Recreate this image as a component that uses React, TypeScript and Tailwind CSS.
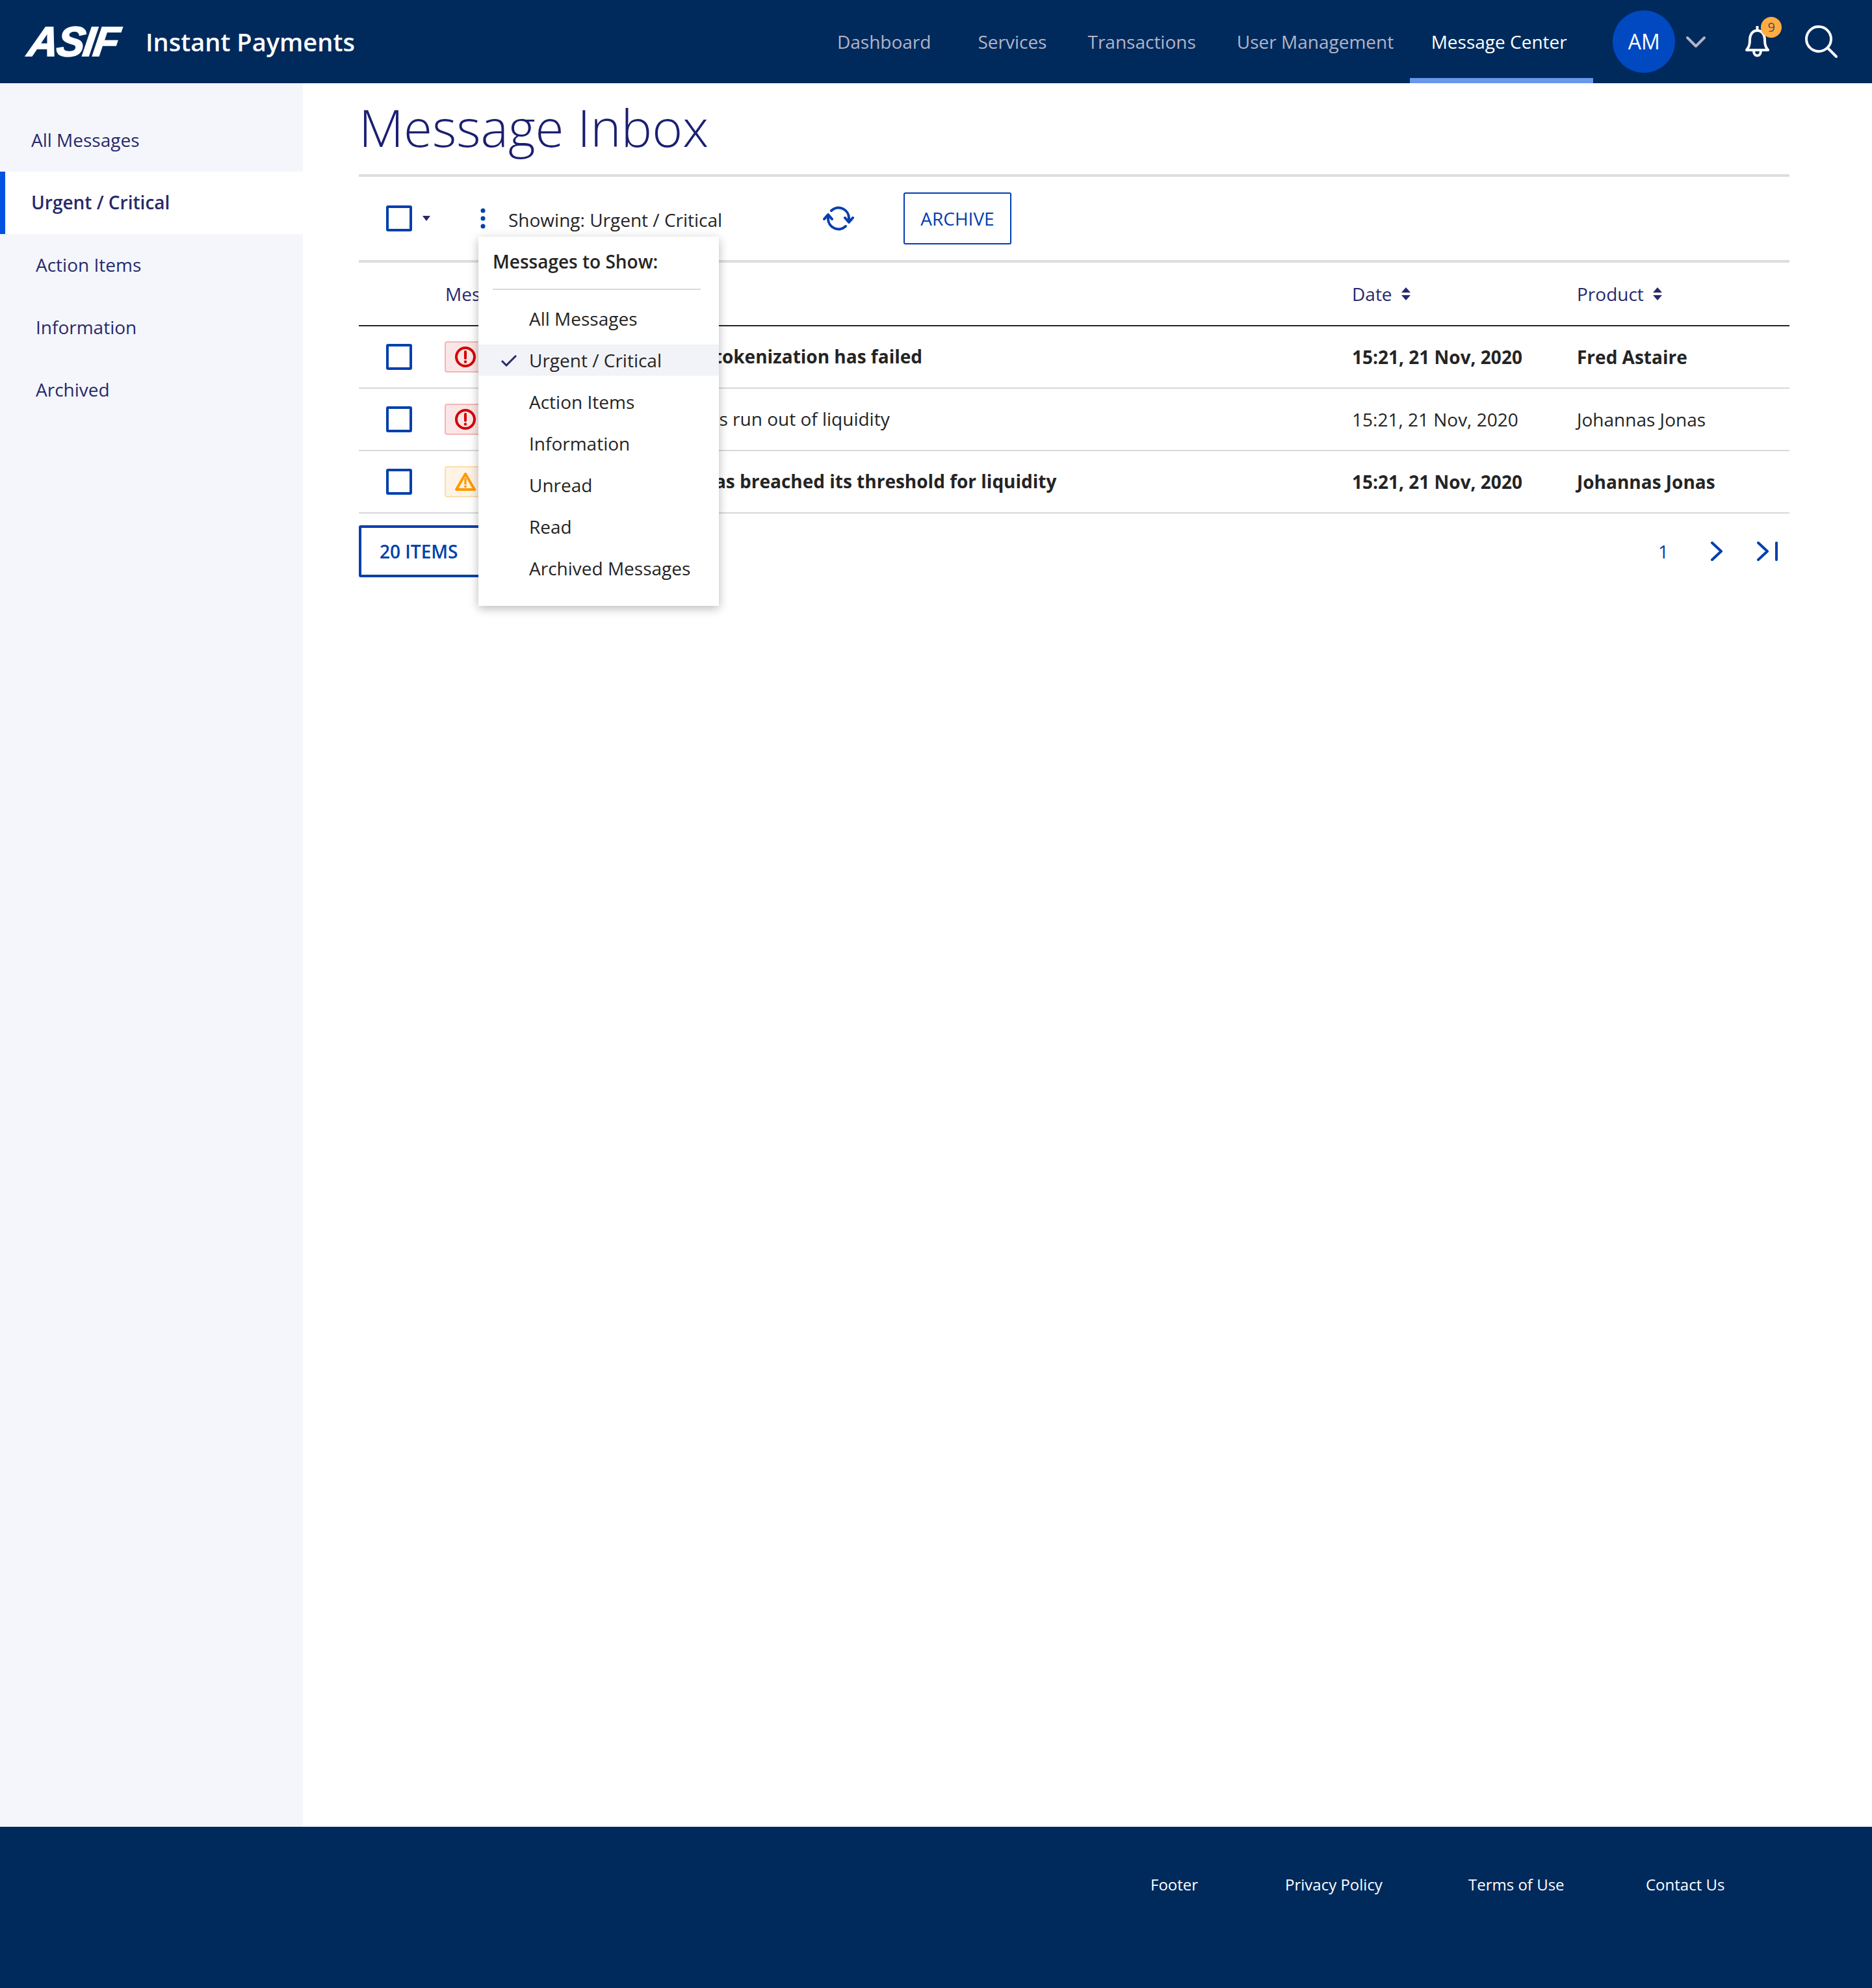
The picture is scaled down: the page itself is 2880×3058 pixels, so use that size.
import React from "react";

const NAV = ["Dashboard", "Services", "Transactions", "User Management"];
const SIDE = ["All Messages", "Urgent / Critical", "Action Items", "Information", "Archived"];
const MENU = ["All Messages", "Urgent / Critical", "Action Items", "Information", "Unread", "Read", "Archived Messages"];

function Box() {
  return <div className="h-[40px] w-[40px] shrink-0 rounded-[3px] border-[4px] border-[#0040ad]" />;
}

function Sort() {
  return (
    <svg width="14" height="20" viewBox="0 0 14 20" className="ml-[14px]">
      <path d="M7 0 L14 8 H0 Z M0 12 H14 L7 20 Z" fill="#27296d" />
    </svg>
  );
}

function Critical() {
  return (
    <svg width="32" height="32" viewBox="0 0 32 32" fill="none">
      <circle cx="16" cy="16" r="14" stroke="#d40000" strokeWidth="4" />
      <path d="M16 8 V18" stroke="#d40000" strokeWidth="4" strokeLinecap="round" />
      <circle cx="16" cy="23.5" r="2.2" fill="#d40000" />
    </svg>
  );
}

function Warning() {
  return (
    <svg width="32" height="30" viewBox="0 0 32 30" fill="none">
      <path d="M16 3 L30 27 H2 Z" stroke="#ff9900" strokeWidth="4" strokeLinejoin="round" />
      <path d="M16 11 V18" stroke="#ff9900" strokeWidth="3.4" strokeLinecap="round" />
      <circle cx="16" cy="22.5" r="1.9" fill="#ff9900" />
    </svg>
  );
}

type Row = {
  level: "critical" | "warning";
  bold: boolean;
  text: string;
  inset: string;
  date: string;
  product: string;
};

const ROWS: Row[] = [
  { level: "critical", bold: true, text: "Your account request tokenization has failed", inset: "ml-[43px]", date: "15:21, 21 Nov, 2020", product: "Fred Astaire" },
  { level: "critical", bold: false, text: "Settlement account has run out of liquidity", inset: "ml-[65px]", date: "15:21, 21 Nov, 2020", product: "Johannas Jonas" },
  { level: "warning", bold: true, text: "Settlement account has breached its threshold for liquidity", inset: "ml-[51px]", date: "15:21, 21 Nov, 2020", product: "Johannas Jonas" },
];

export default function App() {
  return (
    <div className="flex h-[3058px] w-[2880px] flex-col overflow-hidden bg-white font-['Open_Sans',sans-serif] text-[28px] text-[#242424]">
      <header className="flex h-[128px] shrink-0 items-center bg-[#002a5c] text-white">
        <span className="ml-[44px] inline-block w-[180px] skew-x-[-8deg] font-['Liberation_Sans',sans-serif] text-[64px] leading-none font-bold italic tracking-[-2px] [-webkit-text-stroke:2px_white]">
          ASIF
        </span>
        <span className="text-[38px] leading-none font-semibold">Instant Payments</span>
        <nav className="ml-[742px] flex h-full items-center text-[#b3b4c6]">
          <span className="mr-[72px]">{NAV[0]}</span>
          <span className="mr-[63px]">{NAV[1]}</span>
          <span className="mr-[63px]">{NAV[2]}</span>
          <span className="mr-[64px]">{NAV[3]}</span>
          <span className="relative -ml-[39px] flex h-full w-[282px] items-center justify-center pr-[8px] text-white">
            Message Center
            <span className="absolute right-0 bottom-0 left-0 h-[8px] bg-[#6997eb]" />
          </span>
        </nav>
        <div className="ml-[30px] flex h-[96px] w-[96px] items-center justify-center rounded-full bg-[#0049c1] text-[32px] font-medium">AM</div>
        <svg width="32" height="19" viewBox="0 0 32 19" fill="none" className="ml-[16px]">
          <path d="M3 3 L16 16 L29 3" stroke="#b3b4c6" strokeWidth="4" strokeLinecap="round" strokeLinejoin="round" />
        </svg>
        <div className="relative ml-[60px] h-[48px] w-[37px]">
          <svg width="37" height="48" viewBox="0 0 37 48" fill="none">
            <path d="M18.5 1 V7 M7 22 C7 12 12 7 18.5 7 C25 7 30 12 30 22 C30 30 32 33 35 37 H2 C5 33 7 30 7 22 Z" stroke="white" strokeWidth="4" strokeLinejoin="round" strokeLinecap="round" />
            <path d="M13 38 C13 48 24 48 24 38" stroke="white" strokeWidth="4" />
          </svg>
          <span className="absolute -top-[14px] left-[24px] flex h-[32px] w-[32px] items-center justify-center rounded-full bg-[#ffad42] text-[20px] leading-none text-[#4c4c5c]">9</span>
        </div>
        <svg width="50" height="50" viewBox="0 0 50 50" fill="none" className="ml-[55px]">
          <circle cx="21" cy="21" r="19" stroke="white" strokeWidth="4" />
          <path d="M35 35 L48 48" stroke="white" strokeWidth="4" strokeLinecap="round" />
        </svg>
      </header>

      <div className="flex min-h-0 flex-1">
        <aside className="w-[466px] shrink-0 bg-[#f4f6fb] pt-[40px] text-[#27296d]">
          {SIDE.map((s, i) => (
            <div
              key={s}
              className={
                i === 1
                  ? "flex h-[96px] items-center border-l-[8px] border-[#0052e0] bg-white pb-[2px] pl-[40px] font-semibold"
                  : i === 0
                    ? "flex h-[96px] items-center pb-[2px] pl-[48px]"
                    : "flex h-[96px] items-center pb-[2px] pl-[55px]"
              }
            >
              {s}
            </div>
          ))}
        </aside>

        <main className="ml-[86px] w-[2201px]">
          <div className="h-[144px] border-b-[4px] border-[#dddddd]">
            <h1 className="pt-[15px] text-[80px] leading-[104px] font-light text-[#1a1f71]">Message Inbox</h1>
          </div>

          <div className="relative">
            <div className="flex h-[132px] items-center border-b-[4px] border-[#dddddd]">
              <div className="ml-[42px] flex items-center">
                <Box />
              </div>
              <svg width="12" height="8" viewBox="0 0 12 8" className="ml-[16px]">
                <path d="M0 0 H12 L6 8 Z" fill="#27296d" />
              </svg>
              <svg width="8" height="32" viewBox="0 0 8 32" className="ml-[77px]">
                <circle cx="4" cy="4" r="3.5" fill="#0040ad" />
                <circle cx="4" cy="16" r="3.5" fill="#0040ad" />
                <circle cx="4" cy="28" r="3.5" fill="#0040ad" />
              </svg>
              <span className="ml-[35px] w-[484px] pt-[4px]">Showing: Urgent / Critical</span>
              <svg width="48" height="38" viewBox="0 0 48 38" fill="none" stroke="#0040ad" strokeWidth="4" strokeLinecap="round" strokeLinejoin="round">
                <path d="M8 14 V19 A16 16 0 0 0 35 31" />
                <path d="M13 7 A16 16 0 0 1 40 19 V24" />
                <path d="M2 20 L8 13 L14 20" />
                <path d="M34 18 L40 25 L46 18" />
              </svg>
              <button className="ml-[76px] flex h-[80px] w-[166px] items-center justify-center rounded-[3px] border-[2px] border-[#0040ad] text-[#0040ad]">
                ARCHIVE
              </button>
            </div>

            <div className="flex h-[98px] items-center border-b-[2px] border-[#242424] font-medium text-[#27296d]">
              <span className="ml-[133px] w-[1395px]">Message</span>
              <span className="flex w-[346px] items-center">Date<Sort /></span>
              <span className="flex items-center">Product<Sort /></span>
            </div>

            {ROWS.map((r, i) => (
              <div key={i} className={"flex h-[96px] items-center border-b-[2px] border-[#d8d8dc] " + (r.bold ? "font-bold" : "")}>
                <div className="ml-[42px] w-[90px] shrink-0"><Box /></div>
                <div
                  className={
                    "flex h-[48px] w-[64px] shrink-0 items-center rounded-[4px] border-[2px] pl-[14px] " +
                    (r.level === "critical" ? "border-[#f5b5b5] bg-[#fae6e6]" : "border-[#fddcb0] bg-[#fff3e6]")
                  }
                >
                  {r.level === "critical" ? <Critical /> : <Warning />}
                </div>
                <div className="w-[1332px] shrink-0 pb-[2px]">
                  <div className={r.inset}>{r.text}</div>
                </div>
                <span className="w-[346px]">{r.date}</span>
                <span>{r.product}</span>
              </div>
            ))}

            <div className="mt-[18px] flex items-center justify-between pr-[17px]">
              <div className="flex h-[80px] w-[300px] items-center rounded-[3px] border-[4px] border-[#0040ad] pl-[28px] font-semibold text-[#0040ad]">
                20 ITEMS
              </div>
              <div className="flex items-center text-[#0040ad]">
                <span className="mr-[64px]">1</span>
                <svg width="20" height="30" viewBox="0 0 20 30" fill="none" stroke="#0040ad" strokeWidth="4" strokeLinecap="round" strokeLinejoin="round">
                  <path d="M3 2 L17 15 L3 28" />
                </svg>
                <svg width="34" height="30" viewBox="0 0 34 30" fill="none" stroke="#0040ad" strokeWidth="4" strokeLinecap="round" strokeLinejoin="round" className="ml-[51px]">
                  <path d="M3 2 L17 15 L3 28" />
                  <path d="M31 2 V28" />
                </svg>
              </div>
            </div>

            <div className="absolute top-[92px] left-[184px] z-10 h-[568px] w-[370px] bg-white shadow-[0_4px_14px_rgba(0,0,0,0.28)]">
              <div className="mr-[28px] ml-[22px] h-[82px] border-b-[2px] border-[#d8d8e0] pt-[18px] leading-[40px] font-semibold">Messages to Show:</div>
              <div className="pt-[12px]">
                {MENU.map((m, i) => (
                  <div key={m} className="flex h-[64px] items-center">
                    <div className={"flex h-[48px] w-full items-center " + (i === 1 ? "bg-[#f2f3f8]" : "")}>
                      <span className="flex w-[78px] shrink-0 justify-end pr-[18px]">
                        {i === 1 && (
                          <svg width="26" height="20" viewBox="0 0 26 20" fill="none">
                            <path d="M2 11 L9 18 L24 3" stroke="#27296d" strokeWidth="3" />
                          </svg>
                        )}
                      </span>
                      {m}
                    </div>
                  </div>
                ))}
              </div>
            </div>
          </div>
        </main>
      </div>

      <footer className="flex h-[248px] shrink-0 bg-[#002a5c] pt-[71px] text-[24px] leading-[36px] text-white">
        <span className="ml-[1770px] w-[207px]">Footer</span>
        <span className="w-[282px]">Privacy Policy</span>
        <span className="w-[273px]">Terms of Use</span>
        <span>Contact Us</span>
      </footer>
    </div>
  );
}
